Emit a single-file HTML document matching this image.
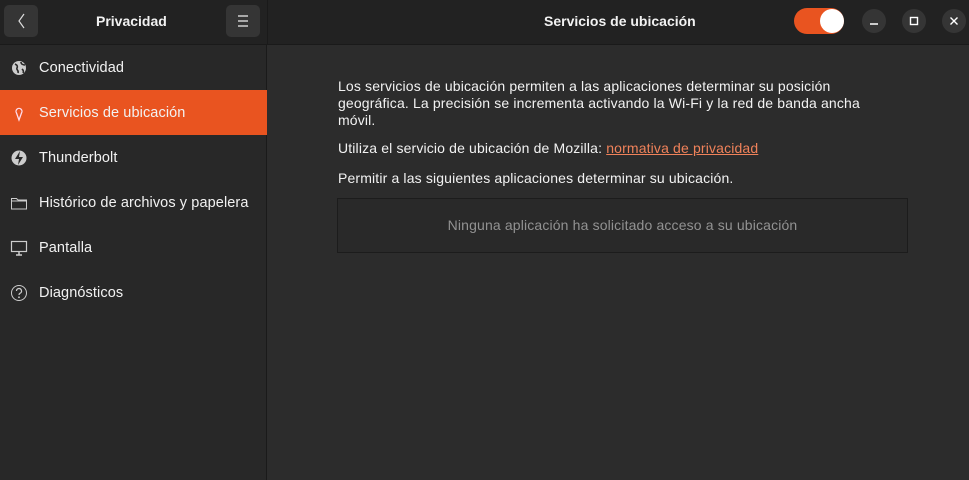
<!DOCTYPE html>
<html><head><meta charset="utf-8"><style>
*{margin:0;padding:0;box-sizing:border-box}
body{width:969px;height:480px;background:#2c2c2c;font-family:"Liberation Sans",sans-serif;color:#f2f2f2;font-size:14px;position:relative;overflow:hidden}
.hdr{position:absolute;left:0;top:0;width:969px;height:45px;background:#222;border-bottom:1px solid #1a1a1a}
.side{position:absolute;left:0;top:45px;width:267px;height:435px;background:#282828;border-right:1px solid #1a1a1a}
.hsep{position:absolute;left:267px;top:0;width:1px;height:45px;background:#1a1a1a}
.btn{position:absolute;top:5px;width:34px;height:32px;background:#353535;border-radius:5px}
.title{position:absolute;top:13px;font-weight:bold;font-size:14px}
.row{position:absolute;left:0;width:267px;height:45px;display:flex;align-items:center}
.row span{position:absolute;left:39px;font-size:14.5px;letter-spacing:.1px}
.row svg{position:absolute;left:10px}
.sel{background:#e95420}
.wb{position:absolute;top:9px;width:24px;height:24px;border-radius:50%;background:#353535}
p{position:absolute;left:338px;font-size:14px;line-height:17px;letter-spacing:.15px;white-space:nowrap}
a{color:#f0825a;text-decoration:underline}
.box{position:absolute;left:337px;top:198px;width:571px;height:55px;border:1px solid #1c1c1c;background:#292929;color:#929292;text-align:center;line-height:53px;font-size:14px;letter-spacing:.15px}
</style></head><body>
<div class="hdr"></div><div class="side"></div><div class="hsep"></div>
<div class="btn" style="left:4px"><svg width="34" height="32"><path d="M20 9 L15 16 L20 23" stroke="#ddd" fill="none" stroke-width="1.2"/></svg></div>
<div class="title" style="left:96px">Privacidad</div>
<div class="btn" style="left:226px"><svg width="34" height="32"><path d="M12 11h10M12 16h10M12 21h10" stroke="#eee" stroke-width="1.2"/></svg></div>
<div class="title" style="left:544px">Servicios de ubicación</div>
<div style="position:absolute;left:794px;top:8px;width:50px;height:26px;border-radius:13px;background:#e95420"></div>
<div style="position:absolute;left:820px;top:9px;width:24px;height:24px;border-radius:50%;background:#fff"></div>
<div class="wb" style="left:862px"><svg width="24" height="24"><path d="M8 15h8" stroke="#fff" stroke-width="1.5"/></svg></div>
<div class="wb" style="left:902px"><svg width="24" height="24"><rect x="8.5" y="8.5" width="7" height="7" stroke="#fff" fill="none" stroke-width="1.4"/></svg></div>
<div class="wb" style="left:942px"><svg width="24" height="24"><path d="M8.5 8.5l7 7M15.5 8.5l-7 7" stroke="#fff" stroke-width="1.4"/></svg></div>

<div class="row" style="top:45px"><svg width="18" height="18"><circle cx="9" cy="9" r="7" fill="#ccc"/><path d="M5 5c2 1 3 2 2 4s2 2 1 5M11 3c0 2 2 3 4 3M12 10c1 1 2 2 1 4" stroke="#282828" stroke-width="1.6" fill="none"/></svg><span>Conectividad</span></div>
<div class="row sel" style="top:90px"><svg width="18" height="18"><path d="M9 16l-2.5-7a3 3 0 1 1 5 0z" fill="none" stroke="#fde" stroke-width="1.3"/></svg><span>Servicios de ubicación</span></div>
<div class="row" style="top:135px"><svg width="18" height="18"><circle cx="9" cy="9" r="7.5" fill="#ccc"/><path d="M10 2L5 10h4l-1 6 5-8H9z" fill="#282828"/></svg><span>Thunderbolt</span></div>
<div class="row" style="top:180px"><svg width="18" height="18"><path d="M1.5 4.5h5l1.5 1.5h8.5v9h-15z M1.5 7h15" stroke="#ccc" fill="none" stroke-width="1"/></svg><span>Histórico de archivos y papelera</span></div>
<div class="row" style="top:225px"><svg width="18" height="18"><rect x="1.5" y="2.5" width="15" height="10" fill="none" stroke="#ccc" stroke-width="1.2"/><path d="M6 16h6M9 13v3" stroke="#ccc" stroke-width="1.5"/></svg><span>Pantalla</span></div>
<div class="row" style="top:270px"><svg width="18" height="18"><circle cx="9" cy="9" r="7.5" fill="none" stroke="#ccc" stroke-width="1"/><path d="M6.5 7a2.5 2.5 0 1 1 3.5 2.3c-.7.4-1 .8-1 1.7" stroke="#ccc" fill="none" stroke-width="1.2"/><circle cx="9" cy="13.3" r=".9" fill="#ccc"/></svg><span>Diagnósticos</span></div>

<p style="top:78px">Los servicios de ubicación permiten a las aplicaciones determinar su posición<br>geográfica. La precisión se incrementa activando la Wi-Fi y la red de banda ancha<br>móvil.</p>
<p style="top:140px">Utiliza el servicio de ubicación de Mozilla: <a>normativa de privacidad</a></p>
<p style="top:170px">Permitir a las siguientes aplicaciones determinar su ubicación.</p>
<div class="box">Ninguna aplicación ha solicitado acceso a su ubicación</div>
</body></html>
